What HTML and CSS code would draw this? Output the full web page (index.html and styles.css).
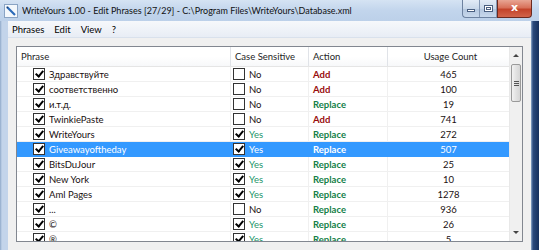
FILE: index.html
```html
<!DOCTYPE html>
<html>

<head>
  <meta charset="utf-8">
  <title>WriteYours - Edit Phrases</title>
  <link rel="stylesheet" href="styles.css">
</head>

<body>
  <div class="window">
    <div class="titlebar">
      <svg class="app-icon" width="14" height="14" viewBox="0 0 14 14">
        <rect x="0.5" y="0.5" width="13" height="13" fill="#f4f8fc" stroke="#8aa4c4"/>
        <path d="M3 3 L11 11" stroke="#2a6ab8" stroke-width="2.2"/>
        <path d="M2.5 2.5 L4.5 3 L3 4.5 Z" fill="#1b3a66"/>
      </svg>
      <span class="title">WriteYours 1.00 - Edit Phrases [27/29] - C:\Program Files\WriteYours\Database.xml</span>
      <div class="caption-buttons">
        <div class="cap-group">
          <div class="cap-btn"><span class="glyph-min"></span></div>
          <div class="cap-btn"><span class="glyph-max"></span></div>
        </div>
        <div class="cap-close">x</div>
      </div>
    </div>

    <div class="frame-body">
      <div class="client">
        <div class="menubar">
          <span class="menu-item">Phrases</span>
          <span class="menu-item">Edit</span>
          <span class="menu-item">View</span>
          <span class="menu-item">?</span>
        </div>

        <div class="content">
          <div class="listview">
            <div class="list-main">
              <div class="row header">
                <div class="cell col-phrase">Phrase</div>
                <div class="cell col-case">Case Sensitive</div>
                <div class="cell col-action">Action</div>
                <div class="cell col-count">Usage Count</div>
              </div>

              <div class="row">
                <div class="cell col-phrase"><span class="check on"></span>Здравствуйте</div>
                <div class="cell col-case"><span class="check"></span>No</div>
                <div class="cell col-action add">Add</div>
                <div class="cell col-count">465</div>
              </div>
              <div class="row">
                <div class="cell col-phrase"><span class="check on"></span>соответственно</div>
                <div class="cell col-case"><span class="check"></span>No</div>
                <div class="cell col-action add">Add</div>
                <div class="cell col-count">100</div>
              </div>
              <div class="row">
                <div class="cell col-phrase"><span class="check on"></span>и.т.д.</div>
                <div class="cell col-case"><span class="check"></span>No</div>
                <div class="cell col-action replace">Replace</div>
                <div class="cell col-count">19</div>
              </div>
              <div class="row">
                <div class="cell col-phrase"><span class="check on"></span>TwinkiePaste</div>
                <div class="cell col-case"><span class="check"></span>No</div>
                <div class="cell col-action add">Add</div>
                <div class="cell col-count">741</div>
              </div>
              <div class="row">
                <div class="cell col-phrase"><span class="check on"></span>WriteYours</div>
                <div class="cell col-case yes"><span class="check on"></span>Yes</div>
                <div class="cell col-action replace">Replace</div>
                <div class="cell col-count">272</div>
              </div>
              <div class="row selected">
                <div class="cell col-phrase"><span class="check on"></span>Giveawayoftheday</div>
                <div class="cell col-case yes"><span class="check on"></span>Yes</div>
                <div class="cell col-action replace">Replace</div>
                <div class="cell col-count">507</div>
              </div>
              <div class="row">
                <div class="cell col-phrase"><span class="check on"></span>BitsDuJour</div>
                <div class="cell col-case yes"><span class="check on"></span>Yes</div>
                <div class="cell col-action replace">Replace</div>
                <div class="cell col-count">25</div>
              </div>
              <div class="row">
                <div class="cell col-phrase"><span class="check on"></span>New York</div>
                <div class="cell col-case yes"><span class="check on"></span>Yes</div>
                <div class="cell col-action replace">Replace</div>
                <div class="cell col-count">10</div>
              </div>
              <div class="row">
                <div class="cell col-phrase"><span class="check on"></span>Aml Pages</div>
                <div class="cell col-case yes"><span class="check on"></span>Yes</div>
                <div class="cell col-action replace">Replace</div>
                <div class="cell col-count">1278</div>
              </div>
              <div class="row">
                <div class="cell col-phrase"><span class="check on"></span>...</div>
                <div class="cell col-case"><span class="check"></span>No</div>
                <div class="cell col-action replace">Replace</div>
                <div class="cell col-count">936</div>
              </div>
              <div class="row">
                <div class="cell col-phrase"><span class="check on"></span>©</div>
                <div class="cell col-case yes"><span class="check on"></span>Yes</div>
                <div class="cell col-action replace">Replace</div>
                <div class="cell col-count">26</div>
              </div>
              <div class="row">
                <div class="cell col-phrase"><span class="check on"></span>®</div>
                <div class="cell col-case yes"><span class="check on"></span>Yes</div>
                <div class="cell col-action replace">Replace</div>
                <div class="cell col-count">5</div>
              </div>
            </div>

            <div class="scrollbar">
              <div class="arrow up"></div>
              <div class="thumb"><span class="grip"></span></div>
              <div class="track"></div>
              <div class="arrow down"></div>
            </div>
          </div>
        </div>
      </div>
    </div>
  </div>
</body>

</html>
```
FILE: styles.css
```css
* {
  margin: 0;
  padding: 0;
  box-sizing: border-box;
}

body {
  width: 539px;
  height: 250px;
  overflow: hidden;
  font-family: Lato, "Noto Sans", sans-serif;
  font-size: 9.5px;
  color: #000;
}

.window {
  width: 539px;
  height: 250px;
  display: flex;
  flex-direction: column;
  background: linear-gradient(to right, #8fa9c9 0px, #c3d4ea 2px, #c3d4ea 529px, #8fa9c9 531px, #2b4a7c 533px, #16305c 539px);
}

/* title bar */
.titlebar {
  height: 21px;
  display: flex;
  align-items: center;
  padding-left: 4px;
  background: linear-gradient(to bottom, #d5e3f3 0%, #c2d5ec 50%, #bcd0e9 100%);
}

.app-icon {
  flex: none;
  margin-right: 4px;
}

.title {
  font-size: 9px;
  white-space: nowrap;
  overflow: hidden;
  color: #111;
  flex: 1;
}

.caption-buttons {
  display: flex;
  flex: none;
  align-self: flex-start;
  margin-right: 7px;
}

.cap-group {
  display: flex;
  height: 18px;
  border: 1px solid #6d82a0;
  border-right: none;
  border-top: none;
  border-radius: 0 0 0 4px;
  background: linear-gradient(to bottom, #e2ebf6 0%, #c9d8ea 50%, #b3c6de 51%, #c8d8ec 100%);
}

.cap-btn {
  width: 17px;
  display: flex;
  align-items: center;
  justify-content: center;
  border-right: 1px solid #8397b4;
}

.glyph-min {
  width: 8px;
  height: 3px;
  margin-top: 4px;
  background: #fff;
  border: 1px solid #4a5f80;
}

.glyph-max {
  width: 9px;
  height: 7px;
  background: #fff;
  border: 1px solid #4a5f80;
  box-shadow: inset 0 0 0 1px #fff, inset 0 0 0 2px #4a5f80;
}

.cap-close {
  width: 35px;
  height: 18px;
  border: 1px solid #6b2a20;
  border-top: none;
  border-radius: 0 0 4px 0;
  background: linear-gradient(to bottom, #e8a593 0%, #d8715a 45%, #c3432a 55%, #d2644a 100%);
  color: #fff;
  font-family: "DejaVu Sans", sans-serif;
  font-weight: bold;
  font-size: 11px;
  line-height: 16px;
  text-align: center;
}

/* frame and client area */
.frame-body {
  flex: 1;
  display: flex;
  padding: 0 8px 0 8px;
}

.client {
  flex: 1;
  display: flex;
  flex-direction: column;
  background: #f0f0f0;
}

.menubar {
  height: 17px;
  display: flex;
  align-items: center;
  gap: 10px;
  padding-left: 4px;
  font-size: 9.5px;
  background: linear-gradient(to bottom, #f6f8fb 0%, #e8edf5 100%);
  border-bottom: 1px solid #d9e1ec;
}

.content {
  flex: 1;
  padding: 8px 8px 0 8px;
}

/* list view */
.listview {
  display: flex;
  height: 196px;
  border: 1px solid #828790;
  background: #fff;
  overflow: hidden;
}

.list-main {
  flex: 1;
  display: flex;
  flex-direction: column;
}

.row {
  display: grid;
  grid-template-columns: 214px 78px 79px 121px;
  height: 15px;
  border-bottom: 1px solid #f0f0f0;
  flex: none;
}

.row.header {
  height: 20px;
  border-bottom: 1px solid #e5e5e5;
  background: linear-gradient(to bottom, #ffffff 0%, #ffffff 50%, #f7f8fa 100%);
}

.header .cell {
  color: #1e1e1e;
  font-weight: normal;
  border-right: 1px solid #e0e3e8;
  padding-left: 4px;
}

.header .col-count {
  justify-content: center;
  border-right: none;
}

.cell {
  display: flex;
  align-items: center;
  white-space: nowrap;
  overflow: hidden;
  border-right: 1px solid #f0f0f0;
  color: #201010;
}

.col-phrase {
  padding-left: 16px;
}

.col-case {
  padding-left: 2px;
}

.col-action {
  padding-left: 4px;
  font-weight: bold;
}

.col-count {
  justify-content: center;
  border-right: none;
}

.add {
  color: #980c0c;
}

.replace {
  color: #148048;
}

.yes {
  color: #23956a;
}

.check {
  width: 12px;
  height: 12px;
  border: 1px solid #333;
  background: #fff;
  margin-right: 4px;
  flex: none;
  position: relative;
}

.check.on::after {
  content: "";
  position: absolute;
  left: 3px;
  top: 0px;
  width: 3px;
  height: 6px;
  border: solid #000;
  border-width: 0 2px 2px 0;
  transform: rotate(40deg);
}

.row.selected {
  background: #3399ff;
  border-bottom-color: #3399ff;
}

.row.selected .cell {
  color: #fff;
  border-right-color: #3399ff;
}

/* scroll bar */
.scrollbar {
  width: 13px;
  display: flex;
  flex-direction: column;
  background: #f0f0f0;
  border-left: 1px solid #e8e8e8;
}

.arrow {
  height: 17px;
  display: flex;
  align-items: center;
  justify-content: center;
}

.arrow::after {
  content: "";
  border-left: 3px solid transparent;
  border-right: 3px solid transparent;
}

.arrow.up::after {
  border-bottom: 3px solid #444;
}

.arrow.down::after {
  border-top: 3px solid #444;
}

.thumb {
  height: 38px;
  margin: 0 1px;
  border: 1px solid #9a9a9a;
  border-radius: 2px;
  background: linear-gradient(to right, #f2f2f2 0%, #e2e2e2 50%, #d6d6d6 100%);
  display: flex;
  align-items: center;
  justify-content: center;
}

.grip {
  width: 5px;
  height: 5px;
  border-top: 1px solid #555;
  border-bottom: 1px solid #555;
  background: linear-gradient(#555, #555) center / 5px 1px no-repeat;
}

.track {
  flex: 1;
}
```
